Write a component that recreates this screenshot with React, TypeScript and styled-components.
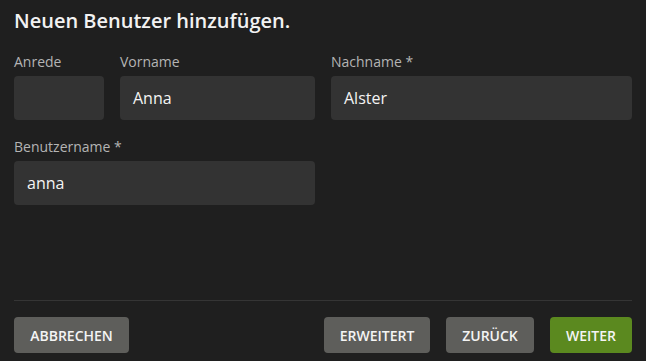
import React from "react";
import styled, { createGlobalStyle } from "styled-components";

const Global = createGlobalStyle`
  html, body { margin: 0; padding: 0; background: #1f1f1f; }
  body { font-family: "Open Sans", "Noto Sans", sans-serif; }
  * { box-sizing: border-box; }
`;

const Page = styled.div`
  width: 646px;
  height: 361px;
  background: #1f1f1f;
  padding: 0 14px;
  display: flex;
  flex-direction: column;
`;

const Title = styled.h1`
  margin: 7px 0 0;
  font-size: 20px;
  line-height: 28px;
  font-weight: 600;
  color: #f2f2f2;
`;

const Form = styled.div`
  margin-top: 17px;
  display: flex;
  flex-direction: column;
  gap: 17px;
`;

const Row = styled.div`
  display: flex;
  gap: 16px;
`;

const Field = styled.div<{ $w: number }>`
  width: ${(p) => p.$w}px;
  display: flex;
  flex-direction: column;
`;

const Label = styled.label`
  font-size: 14px;
  line-height: 19px;
  color: #b4b4b4;
  height: 24px;
`;

const Input = styled.div`
  height: 44px;
  background: #333333;
  border-radius: 4px;
  padding: 0 13px;
  display: flex;
  align-items: center;
  font-size: 16px;
  color: #f4f4f4;
`;

const Spacer = styled.div`
  flex: 1;
`;

const Divider = styled.div`
  height: 1px;
  background: #353535;
`;

const Footer = styled.div`
  display: flex;
  align-items: center;
  gap: 16px;
  padding: 16px 0 8px;
`;

const Button = styled.button<{ $primary?: boolean; $w: number }>`
  width: ${(p) => p.$w}px;
  height: 36px;
  border: none;
  border-radius: 4px;
  background: ${(p) => (p.$primary ? "#5b891f" : "#5e5e5b")};
  color: #f4f4f4;
  font-family: "Open Sans", "Noto Sans", sans-serif;
  font-size: 14px;
  font-weight: 600;
  text-transform: uppercase;
  padding: 0;
  cursor: pointer;
`;

const Grow = styled.div`
  flex: 1;
`;

export default function App() {
  return (
    <>
      <Global />
      <Page>
        <Title>Neuen Benutzer hinzufügen.</Title>
        <Form>
          <Row>
            <Field $w={90}>
              <Label>Anrede</Label>
              <Input />
            </Field>
            <Field $w={195}>
              <Label>Vorname</Label>
              <Input>Anna</Input>
            </Field>
            <Field $w={301}>
              <Label>Nachname *</Label>
              <Input>Alster</Input>
            </Field>
          </Row>
          <Row>
            <Field $w={301}>
              <Label>Benutzername *</Label>
              <Input>anna</Input>
            </Field>
          </Row>
        </Form>
        <Spacer />
        <Divider />
        <Footer>
          <Button $w={115}>Abbrechen</Button>
          <Grow />
          <Button $w={106}>Erweitert</Button>
          <Button $w={88}>Zurück</Button>
          <Button $w={82} $primary>Weiter</Button>
        </Footer>
      </Page>
    </>
  );
}
